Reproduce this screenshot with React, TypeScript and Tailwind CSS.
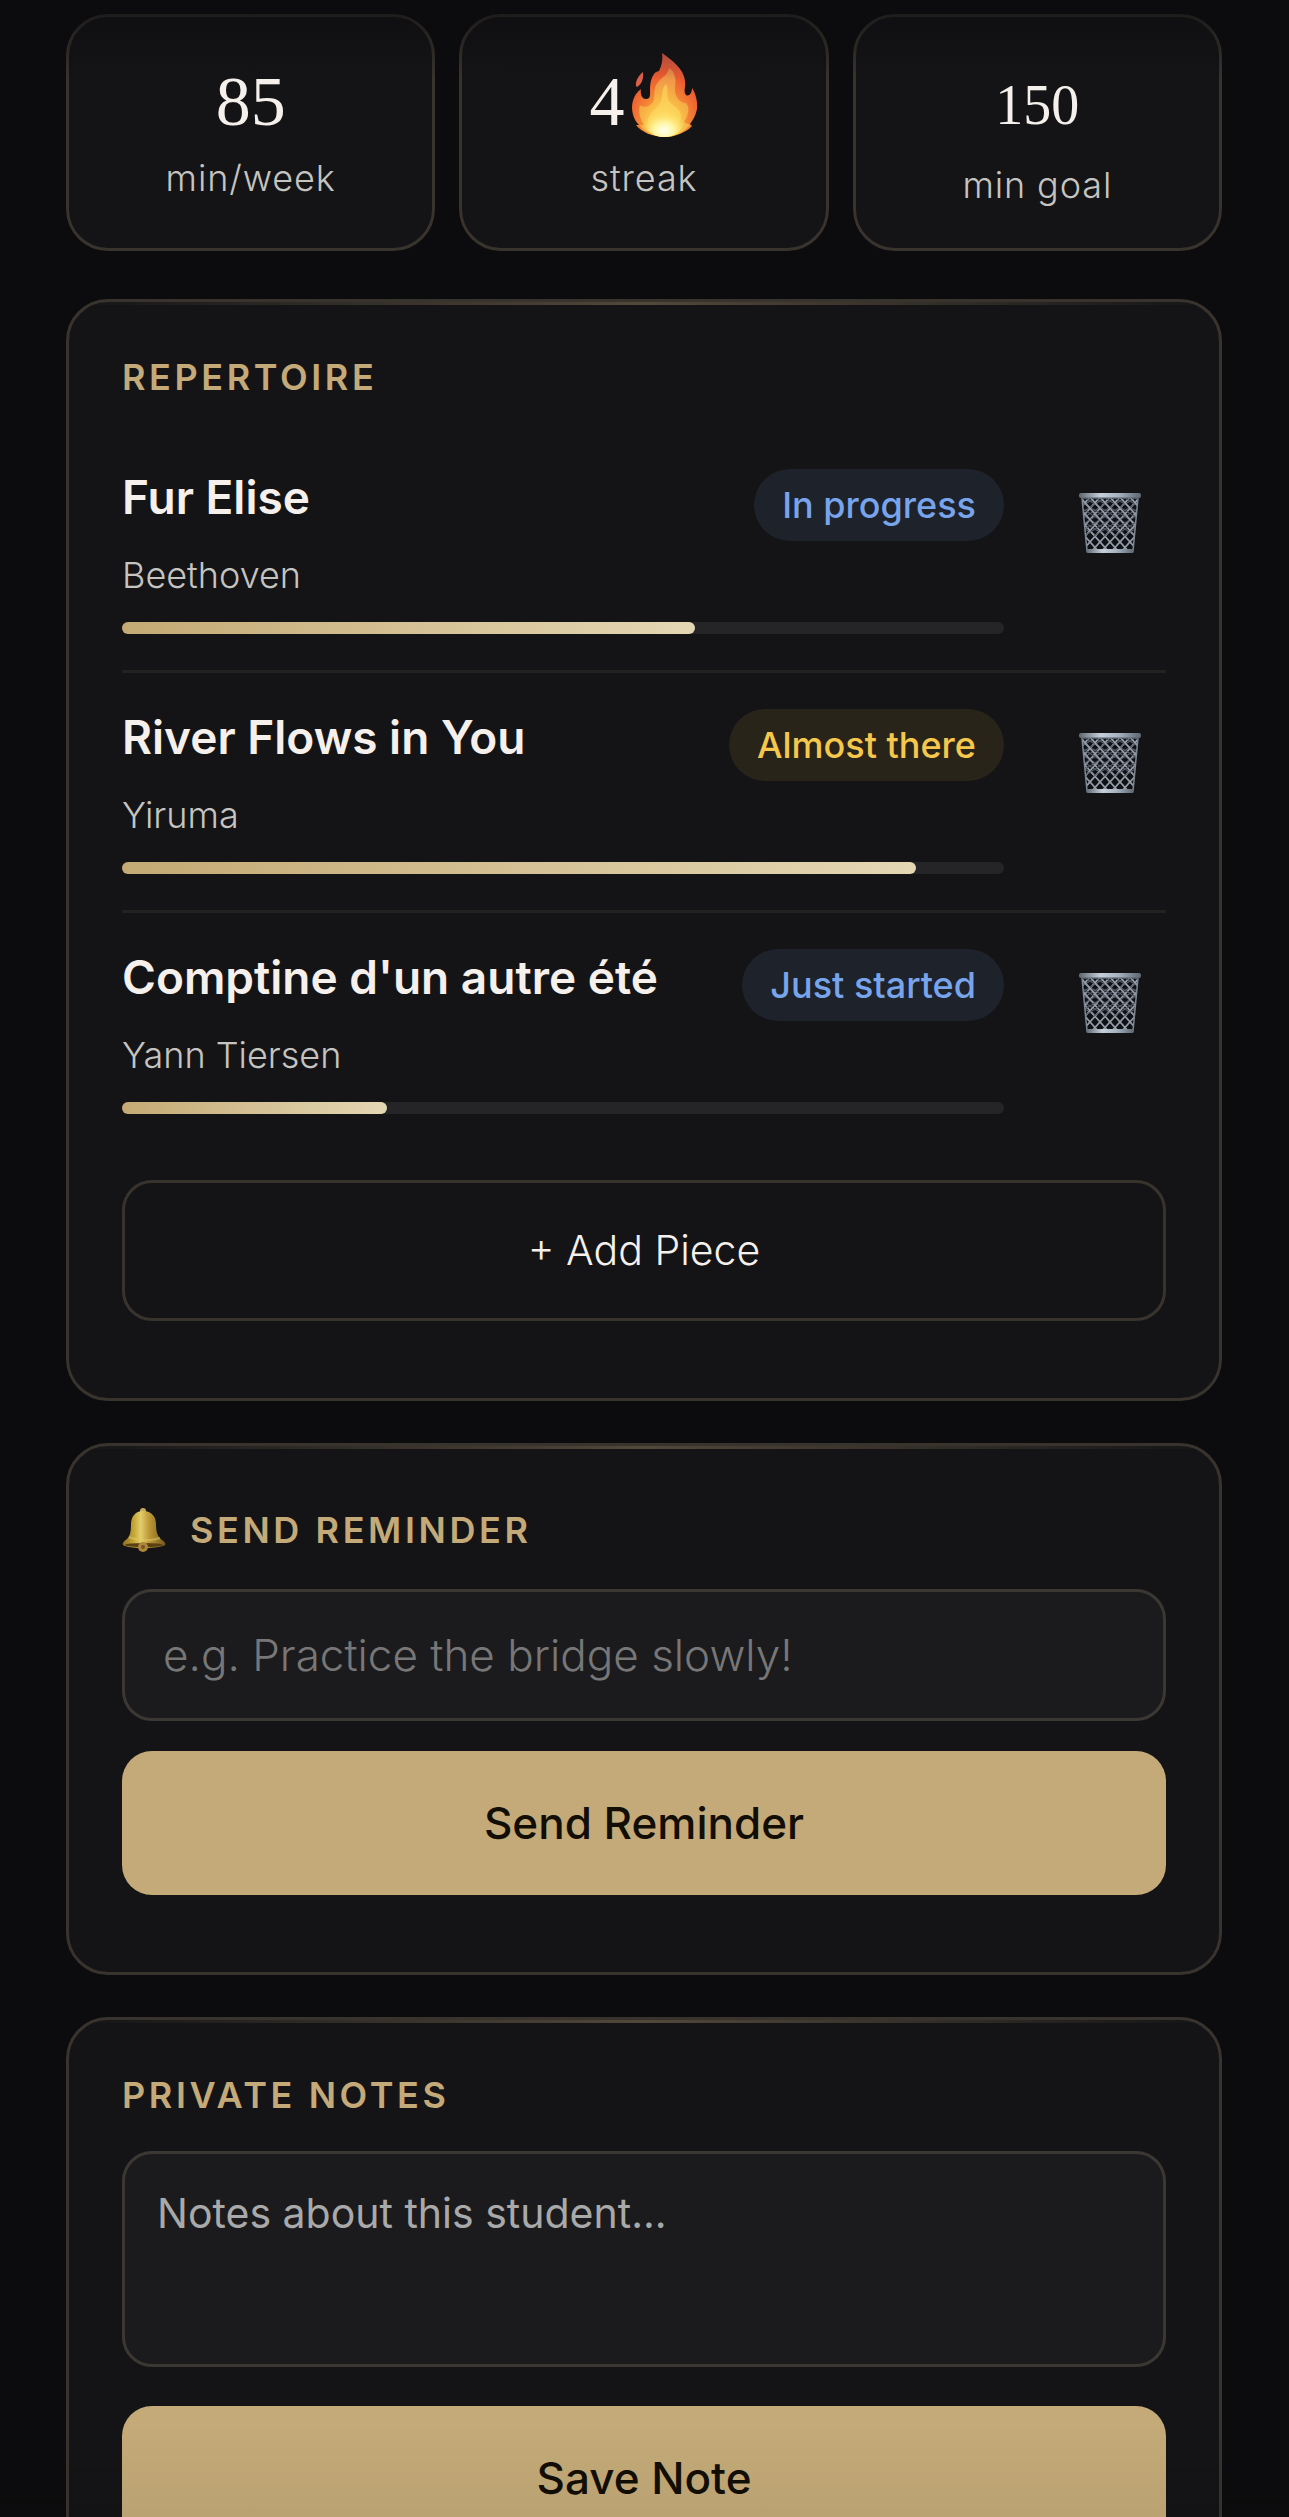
import React from "react";

const stats = [
  { value: "85", label: "min/week", number: "text-[70px] leading-[98px]" },
  { value: "4", label: "streak", number: "text-[70px] leading-[98px]", flame: true },
  { value: "150", label: "min goal", number: "text-[56px] leading-[105px]" },
];

const pieces = [
  {
    title: "Fur Elise",
    composer: "Beethoven",
    status: "In progress",
    badge: "bg-[#1e222a] text-[#78a4ec]",
    progress: 65,
  },
  {
    title: "River Flows in You",
    composer: "Yiruma",
    status: "Almost there",
    badge: "bg-[#292419] text-[#f5c84c]",
    progress: 90,
  },
  {
    title: "Comptine d'un autre été",
    composer: "Yann Tiersen",
    status: "Just started",
    badge: "bg-[#1e222a] text-[#78a4ec]",
    progress: 30,
  },
];

const Flame: React.FC = () => (
  <svg viewBox="0 0 66 84" className="w-[66px] h-[84px] flex-shrink-0" aria-hidden="true">
    <defs>
      <radialGradient id="flameOuter" cx="0.5" cy="0.85" r="0.85">
        <stop offset="0" stopColor="#fbd24e" />
        <stop offset="0.4" stopColor="#f58a35" />
        <stop offset="0.7" stopColor="#ec5a30" />
        <stop offset="1" stopColor="#e0604c" />
      </radialGradient>
      <radialGradient id="flameMid" cx="0.5" cy="0.9" r="0.9">
        <stop offset="0" stopColor="#ffee7a" />
        <stop offset="0.5" stopColor="#f8bb46" />
        <stop offset="1" stopColor="#ec8e4e" />
      </radialGradient>
      <radialGradient id="flameCore" cx="0.5" cy="0.8" r="0.6">
        <stop offset="0" stopColor="#fffff0" />
        <stop offset="0.4" stopColor="#fff7a8" />
        <stop offset="1" stopColor="#fde05a" stopOpacity="0" />
      </radialGradient>
    </defs>
    <path
      d="M30 0C40 7 52 16 53 28C54 34 51 38 54 42C57 44 60 40 60 35C63 39 66 48 65 56C64 62 61 67 58 71L60 73C55 79 43 84 33 84C21 84 9 79 4 72L7 72C2 67 0 60 0 54C0 48 3 40 9 36C8 41 10 46 14 46C19 46 18 41 18 36C18 29 20 22 24 19L27 18C30 12 31 6 30 0Z"
      fill="url(#flameOuter)"
    />
    <path d="M11 19C7 22 3 28 4 33L5 34C9 32 12 26 11 19Z" fill="#dc614b" />
    <path
      d="M37 15C44 19 44 28 43 34C42 44 48 50 54 50C58 54 57 61 52 69L58 72C50 81 40 84 33 84C23 84 11 78 8 72L12 72C8 66 6 59 8 52C11 55 18 54 21 49C24 42 20 35 27 28C32 23 36 21 37 15Z"
      fill="url(#flameMid)"
      opacity="0.9"
    />
    <path
      d="M34 31C37 36 34 43 37 48C41 54 47 54 49 62C50 69 43 81 33 84C23 82 15 75 16 67C17 58 26 56 29 48C31 42 29 36 34 31Z"
      fill="#ffdf62"
      opacity="0.55"
    />
    <ellipse cx="32" cy="68" rx="20" ry="16" fill="url(#flameCore)" />
  </svg>
);

const Bell: React.FC = () => (
  <svg viewBox="0 0 44 44" className="w-11 h-11 flex-shrink-0" aria-hidden="true">
    <defs>
      <linearGradient id="bellBody" x1="0" x2="1">
        <stop offset="0" stopColor="#8d6d1f" />
        <stop offset="0.28" stopColor="#c9ab3a" />
        <stop offset="0.42" stopColor="#e2cd6c" />
        <stop offset="0.62" stopColor="#bd9836" />
        <stop offset="1" stopColor="#75591c" />
      </linearGradient>
    </defs>
    <circle cx="21" cy="3" r="3" fill="#c9ac5a" />
    <path
      d="M21 3C30 3 34 9 34 16C34 25 36 29 40 32C43 34 44 36 43 37C38 41 5 41 1 37C0 35 2 33 5 31C8 28 9 24 9 16C9 9 13 3 21 3Z"
      fill="url(#bellBody)"
    />
    <path d="M7 29C15 33 30 33 38 30" stroke="#e4cb66" strokeWidth="2" fill="none" opacity="0.5" />
    <ellipse cx="22" cy="37" rx="19" ry="2" fill="#584012" />
    <circle cx="21" cy="39" r="5" fill="#ae873a" />
    <circle cx="21" cy="39" r="2" fill="#765523" />
  </svg>
);

const lattice = Array.from({ length: 14 }, (_, i) => -50 + i * 10);

const Basket: React.FC<{ id: string }> = ({ id }) => (
  <svg viewBox="0 0 62 62" className="w-[62px] h-[62px]" aria-hidden="true">
    <defs>
      <clipPath id={`${id}-mesh`}>
        <path d="M3 5H59L54 58H8Z" />
      </clipPath>
      <linearGradient id={`${id}-rim`} x1="0" x2="1">
        <stop offset="0" stopColor="#5d6671" />
        <stop offset="0.35" stopColor="#c6d0da" />
        <stop offset="0.65" stopColor="#a3b0be" />
        <stop offset="1" stopColor="#5d6671" />
      </linearGradient>
    </defs>
    <path d="M3 5H59L54 58H8Z" fill="#0e1115" />
    <g clipPath={`url(#${id}-mesh)`} fill="none">
      {lattice.map((x) => (
        <g key={x}>
          <path d={`M${x + 3} 4L${x + 67} 44M${x + 59} 4L${x - 5} 44`} stroke="#535b66" strokeWidth="1.2" />
          <path d={`M${x} 4L${x + 50} 60M${x + 62} 4L${x + 12} 60`} stroke="#959da8" strokeWidth="1.7" />
        </g>
      ))}
    </g>
    <path d="M3 6L8 59M59 6L54 59" stroke="#7d8794" strokeWidth="1.5" />
    <rect x="0" y="1" width="62" height="5" rx="2" fill={`url(#${id}-rim)`} />
    <path d="M2 6H60" stroke="#525a64" strokeWidth="1" />
    <rect x="7" y="57" width="48" height="4" rx="2" fill={`url(#${id}-rim)`} />
  </svg>
);

const Card: React.FC<{ children: React.ReactNode }> = ({ children }) => (
  <section className="relative overflow-hidden rounded-[42px] border-[3px] border-[#38332d] bg-[#141416] px-[53px] py-12">
    <div className="absolute inset-x-0 top-0 h-[3px] bg-gradient-to-r from-transparent via-[#52483a] to-transparent" />
    {children}
  </section>
);

const titleStyle = "text-[36px] font-semibold uppercase tracking-[0.1em] text-[#c4aa78]";
const goldButton =
  "block h-36 w-full rounded-[30px] bg-[#c4aa78] text-[44px] font-medium text-[#120e06] mb-[29px]";

const App: React.FC = () => {
  return (
    <main className="relative h-screen overflow-hidden bg-[#0c0c0e] pl-[66px] pr-[67px] pt-[14px] font-['Inter',sans-serif] text-[#f5f0eb]">
      {/* Stats */}
      <div className="grid grid-cols-3 gap-6 mb-12">
        {stats.map((stat) => (
          <div
            key={stat.label}
            className="rounded-[42px] border-[3px] border-[#38332d] bg-[#141416] py-9 text-center"
          >
            <div className="flex items-start justify-center gap-2">
              <span className={`font-['Liberation_Serif',serif] ${stat.number}`}>{stat.value}</span>
              {stat.flame && <Flame />}
            </div>
            <p className="text-[36px] leading-[54px] font-light tracking-wide text-[#c6c4c1]">
              {stat.label}
            </p>
          </div>
        ))}
      </div>

      <div className="flex flex-col gap-[42px]">
        {/* Repertoire */}
        <Card>
          <h2 className={`${titleStyle} leading-[54px] mb-[29px]`}>Repertoire</h2>
          <ul>
            {pieces.map((piece, i) => (
              <li
                key={piece.title}
                className="flex items-start gap-[50px] border-b-[3px] border-[#222220] py-9 last:border-b-0"
              >
                <div className="flex-1">
                  <div className="flex items-start justify-between">
                    <div>
                      <h3 className="text-[46px] leading-[56px] font-semibold mb-[23px]">{piece.title}</h3>
                      <p className="text-[36px] leading-[54px] font-light text-[#c6c4c1]">
                        {piece.composer}
                      </p>
                    </div>
                    <span
                      className={`rounded-full px-7 text-[36px] leading-[72px] font-medium ${piece.badge}`}
                    >
                      {piece.status}
                    </span>
                  </div>
                  <div className="mt-5 h-3 rounded-full bg-[#252527]">
                    <div
                      className="h-3 rounded-full bg-gradient-to-r from-[#c4aa74] to-[#e4d7b4]"
                      style={{ width: `${piece.progress}%` }}
                    />
                  </div>
                </div>
                <button
                  type="button"
                  aria-label={`Delete ${piece.title}`}
                  className="flex h-[108px] w-28 items-center justify-center"
                >
                  <Basket id={`basket-${i}`} />
                </button>
              </li>
            ))}
          </ul>
          <button
            type="button"
            className="mt-[30px] mb-[29px] block h-[141px] w-full rounded-[30px] border-[3px] border-[#38332d] text-[41px] font-light"
          >
            + Add Piece
          </button>
        </Card>

        {/* Reminder */}
        <Card>
          <h2 className={`${titleStyle} flex items-center gap-6 leading-[72px] mb-[23px]`}>
            <Bell />
            <label htmlFor="reminder">Send Reminder</label>
          </h2>
          <input
            id="reminder"
            type="text"
            placeholder="e.g. Practice the bridge slowly!"
            className="mb-[30px] block h-[132px] w-full rounded-[30px] border-[3px] border-[#3b3733] bg-[#1b1b1d] px-[38px] text-[44px] font-light placeholder:text-[#777777]"
          />
          <button type="button" className={goldButton}>
            Send Reminder
          </button>
        </Card>

        {/* Notes */}
        <Card>
          <h2 className={`${titleStyle} leading-[54px] mb-[29px]`}>
            <label htmlFor="notes">Private Notes</label>
          </h2>
          <textarea
            id="notes"
            placeholder="Notes about this student..."
            className="mb-[39px] block h-[216px] w-full resize-none rounded-[30px] border-[3px] border-[#3b3733] bg-[#1b1b1d] px-8 py-7 text-[41px] leading-[63px] placeholder:text-[#a9a9a9]"
          />
          <button type="button" className={goldButton}>
            Save Note
          </button>
        </Card>
      </div>

      {/* Edge fades */}
      <div className="pointer-events-none absolute inset-x-0 top-0 h-20 bg-gradient-to-b from-[#0c0c0e]/70 to-transparent" />
      <div className="pointer-events-none absolute inset-x-0 bottom-0 h-24 bg-gradient-to-t from-black/5 to-transparent" />
    </main>
  );
};

export default App;
